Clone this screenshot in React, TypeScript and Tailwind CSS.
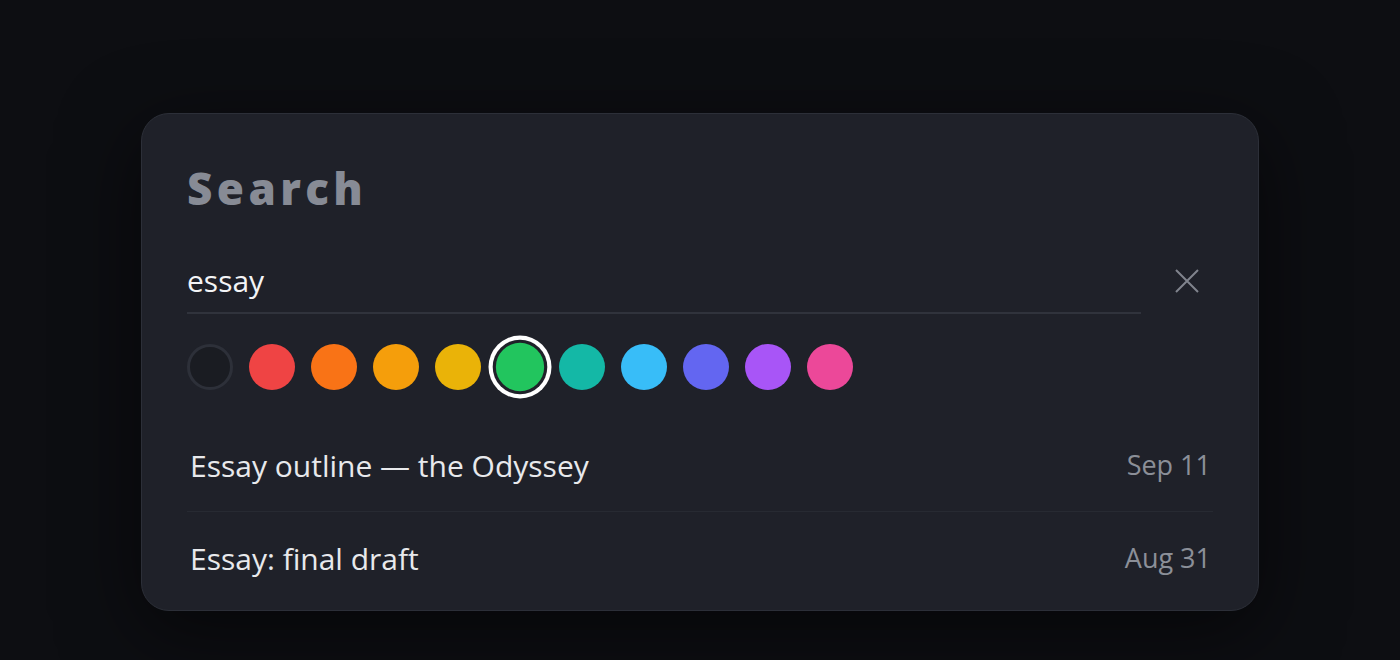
import { useState } from 'react';

const colors = [
    '#ef4444',
    '#f97316',
    '#f59e0b',
    '#eab308',
    '#22c55e',
    '#14b8a6',
    '#38bdf8',
    '#6366f1',
    '#a855f7',
    '#ec4899',
];

const results = [
    { title: 'Essay outline — the Odyssey', date: 'Sep 11' },
    { title: 'Essay: final draft', date: 'Aug 31' },
];

export default function App() {
    const [query, setQuery] = useState('essay');
    const [selected, setSelected] = useState<string | null>('#22c55e');

    return (
        <div className="min-h-[660px] bg-[#0d0e12] pt-[113px] font-['Open_Sans','Noto_Sans',sans-serif]">
            <div className="mx-auto w-[1118px] rounded-[28px] border border-[#2c2f38] bg-[#1f2129] px-[45px] pt-[52px] pb-[6px] shadow-[0_20px_80px_rgba(0,0,0,0.55)]">
                <h1 className="text-[44px] leading-none font-extrabold tracking-[0.1em] text-[#878b95]">
                    Search
                </h1>

                <div className="mt-[42px] flex items-center">
                    <div className="flex-1 border-b-2 border-[#30333c]">
                        <input
                            value={query}
                            onChange={(e) => setQuery(e.target.value)}
                            className="h-[60px] w-full bg-transparent pb-[4px] text-[30px] text-[#f3f4f6] outline-none"
                        />
                    </div>
                    <button
                        type="button"
                        onClick={() => setQuery('')}
                        aria-label="Clear search"
                        className="mr-[3px] -mt-[4px] ml-[23px] flex size-[46px] items-center justify-center text-[#80848d]"
                    >
                        <svg width="24" height="24" viewBox="0 0 24 24" fill="none">
                            <path
                                d="M1 1L23 23M23 1L1 23"
                                stroke="currentColor"
                                strokeWidth="2"
                            />
                        </svg>
                    </button>
                </div>

                <div className="mt-[30px] flex gap-4">
                    <button
                        type="button"
                        onClick={() => setSelected(null)}
                        aria-label="No colour"
                        className="size-[46px] rounded-full border-[3px] border-[#2d3039] bg-[#1a1c22]"
                    />
                    {colors.map((color) => (
                        <button
                            key={color}
                            type="button"
                            onClick={() => setSelected(color)}
                            aria-label={color}
                            style={{ backgroundColor: color }}
                            className={
                                selected === color
                                    ? 'size-[46px] scale-105 rounded-full ring-[4px] ring-white ring-offset-[3px] ring-offset-[#1f2129]'
                                    : 'size-[46px] rounded-full'
                            }
                        />
                    ))}
                </div>

                <ul className="mt-[30px]">
                    {results.map((item, i) => (
                        <li
                            key={item.title}
                            className={
                                i < results.length - 1
                                    ? 'flex h-[92px] items-center justify-between border-b border-[#272a32] pr-[2px] pl-[3px]'
                                    : 'flex h-[92px] items-center justify-between pr-[2px] pl-[3px]'
                            }
                        >
                            <span className="text-[30px] text-[#e8e9ec]">
                                {item.title}
                            </span>
                            <span className="text-[27px] text-[#8b8f98]">
                                {item.date}
                            </span>
                        </li>
                    ))}
                </ul>
            </div>
        </div>
    );
}
